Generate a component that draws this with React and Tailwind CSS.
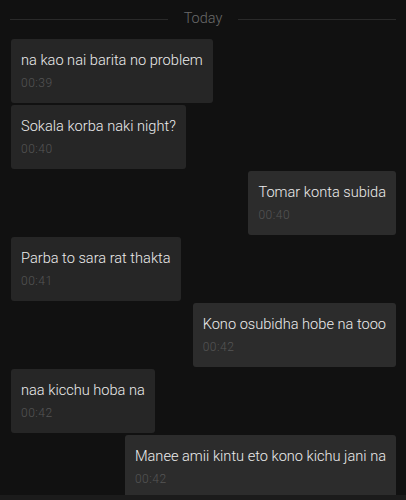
import React from 'react';

const messages = [
  { text: 'na kao nai barita no problem', time: '00:39', mine: false },
  { text: 'Sokala korba naki night?', time: '00:40', mine: false },
  { text: 'Tomar konta subida', time: '00:40', mine: true },
  { text: 'Parba to sara rat thakta', time: '00:41', mine: false },
  { text: 'Kono osubidha hobe na tooo', time: '00:42', mine: true },
  { text: 'naa kicchu hoba na', time: '00:42', mine: false },
  { text: 'Manee amii kintu eto kono kichu jani na', time: '00:42', mine: true },
];

const Bubble = ({ msg }) => (
  <div className={`flex ${msg.mine ? 'justify-end' : 'justify-start'}`}>
    <div
      className={`h-16 shrink-0 rounded-[3px] pl-[10px] pr-[10px] pt-[11px] ${
        msg.mine ? 'bg-[#2c2c2c]' : 'bg-[#262626]'
      }`}
    >
      <div className="text-[14.6px] font-light leading-5 text-[#ececec] whitespace-nowrap">{msg.text}</div>
      <div className="mt-[5px] text-[12px] font-light leading-4 tracking-[0.5px] text-[#555555]">{msg.time}</div>
    </div>
  </div>
);

export default function App() {
  return (
    <div
      className="h-[500px] w-[406px] overflow-hidden bg-[#111111] flex flex-col"
      style={{ fontFamily: 'Roboto, "Noto Sans", sans-serif' }}
    >
      <div className="flex h-[39px] shrink-0 items-center pl-[10px] pr-[10px] pb-[1px]">
        <div className="h-px flex-1 bg-[#2a2a2a]" />
        <span className="px-4 text-[14.5px] font-light text-[#6a6a6a]">Today</span>
        <div className="h-px flex-1 bg-[#2a2a2a]" />
      </div>
      <div className="flex flex-1 flex-col gap-[2px] overflow-hidden pl-[11px] pr-[10px]">
        {messages.map((m, i) => (
          <Bubble key={i} msg={m} />
        ))}
      </div>
      <div className="h-[5px] shrink-0 bg-[#1b1b1b]" />
    </div>
  );
}
